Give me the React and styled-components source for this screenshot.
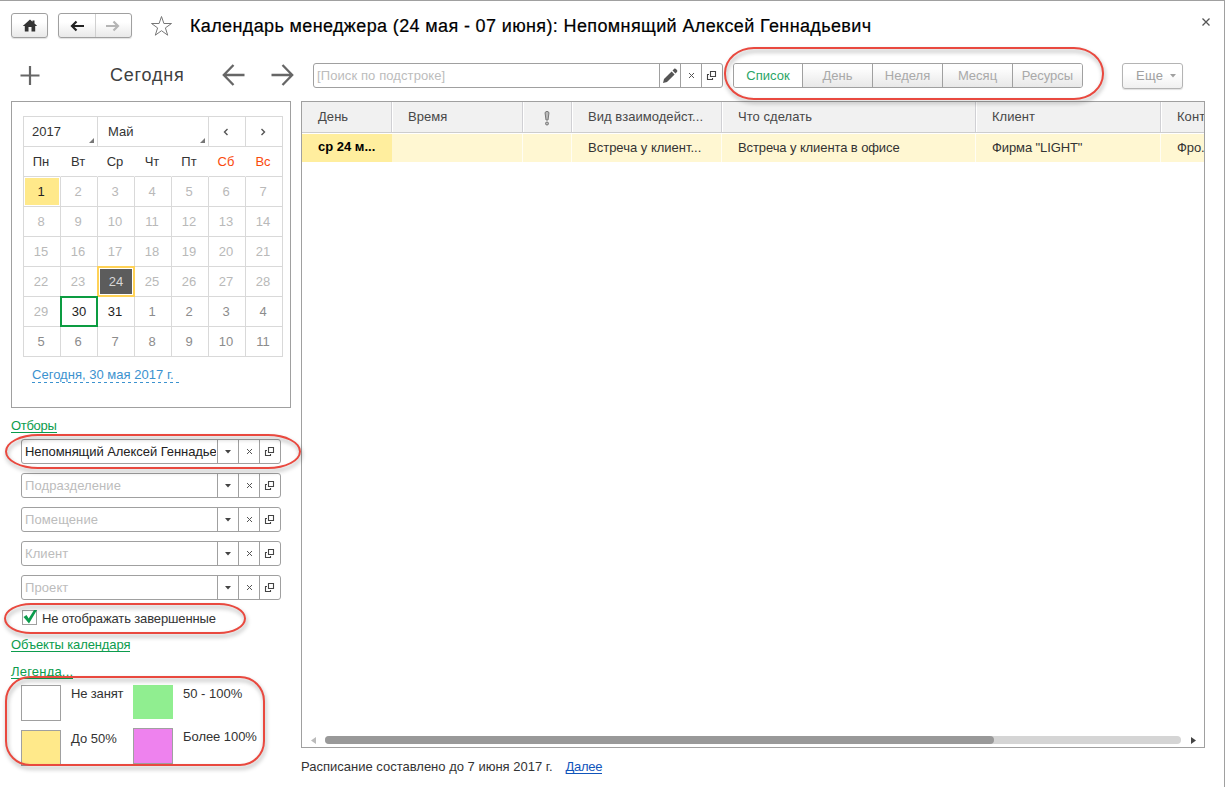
import React from "react";
import styled, { createGlobalStyle, css } from "styled-components";

const Global = createGlobalStyle`
  * { box-sizing: border-box; }
  body { margin: 0; background: #fff; }
  #root { font: 13px/16px "Liberation Sans", Arial, sans-serif; color: #333; }
`;

const line = "#a0a0a0";

const Window = styled.div`
  position: relative;
  width: 1225px;
  height: 787px;
  overflow: hidden;
  background: #fff;
  border-top: 1px solid ${line};
  border-right: 1px solid ${line};
`;

const Label = styled.span`
  white-space: nowrap;
  letter-spacing: ${(p) => p.$ls ?? 0}px;
  margin-top: ${(p) => p.$mt || 0}px;
`;

/* Title bar */
const TitleBar = styled.header`
  display: flex;
  align-items: center;
  height: 49px;
  padding: 0 12px 0 11px;
`;
const buttonFace = css`
  border: 1px solid ${line};
  border-radius: 3px;
  background: linear-gradient(#fff 35%, #e9e9e9);
  box-shadow: 0 1px 1px rgba(0, 0, 0, 0.12);
`;
const HomeButton = styled.button`
  ${buttonFace}
  width: 37px;
  height: 25px;
  padding: 0;
  display: flex;
  align-items: center;
  justify-content: center;
`;
const NavGroup = styled.div`
  ${buttonFace}
  display: flex;
  width: 74px;
  height: 25px;
  margin-left: 10px;
`;
const NavItem = styled.div`
  flex: 1;
  display: flex;
  align-items: center;
  justify-content: center;
  & + & { border-left: 1px solid #d0d0d0; }
`;
const Star = styled.svg`
  margin-left: 18px;
`;
const Title = styled.h1`
  margin: 1px 0 0 17px;
  flex: 1;
  font-size: 18px;
  line-height: 24px;
  font-weight: 400;
  color: #000;
  white-space: nowrap;
  letter-spacing: 0.37px;
  -webkit-text-stroke: 0.2px #000;
`;
const CloseIcon = styled.svg`
  margin-top: -8px;
`;

/* Toolbar */
const Toolbar = styled.div`
  display: flex;
  align-items: center;
  height: 51px;
  padding-left: 20px;
`;
const TodayButton = styled.div`
  width: 76px;
  margin-left: 70px;
  margin-top: -1px;
  font-size: 18px;
  line-height: 22px;
  color: #404040;
  letter-spacing: 0.8px;
  white-space: nowrap;
`;
const ArrowSvg = styled.svg`
  margin-left: ${(p) => p.$gap}px;
  margin-top: -1px;
`;
const Field = styled.div`
  display: flex;
  width: ${(p) => p.$w}px;
  height: 25px;
  border: 1px solid ${line};
  border-radius: 3px;
  background: #fff;
  margin-left: ${(p) => p.$ml || 0}px;
`;
const FieldText = styled.div`
  flex: 1;
  min-width: 0;
  overflow: hidden;
  white-space: nowrap;
  padding-left: 3px;
  margin-right: 1px;
  line-height: 23px;
  color: ${(p) => (p.$filled ? "#222" : "#bcbcbc")};
  letter-spacing: ${(p) => p.$ls ?? 0.1}px;
`;
const FieldButton = styled.div`
  width: 21px;
  border-left: 1px solid ${line};
  display: flex;
  align-items: center;
  justify-content: center;
`;
const Segments = styled.div`
  display: flex;
  width: 350px;
  height: 25px;
  margin-left: 10px;
  border: 1px solid ${line};
  border-radius: 3px;
  overflow: hidden;
`;
const Segment = styled.div`
  width: 70px;
  text-align: center;
  line-height: 24px;
  color: ${(p) => (p.$active ? "#2aa566" : "#a9a9a9")};
  background: ${(p) => (p.$active ? "#fff" : "linear-gradient(#fdfdfd 20%, #e8e8e8)")};
  & + & { border-left: 1px solid ${line}; }
  &:first-child { width: 68px; }
`;
const MoreButton = styled.div`
  ${buttonFace}
  border-color: #b4b4b4;
  background: linear-gradient(#fff 40%, #f0f0f0);
  width: 61px;
  height: 26px;
  margin-left: 39px;
  padding-left: 13px;
  display: flex;
  align-items: center;
  gap: 7px;
  color: #a0a0a0;
  letter-spacing: 0.3px;
`;

/* Main area */
const Body = styled.div`
  display: flex;
  gap: 10px;
  padding-left: 11px;
`;
const Side = styled.aside`
  width: 280px;
`;
const CalendarPanel = styled.section`
  height: 307px;
  border: 1px solid ${line};
  padding: 14px 7px 0 11px;
`;
const Grid = styled.div`
  display: grid;
  grid-template-columns: repeat(7, 37px);
  grid-auto-rows: 30px;
  width: 260px;
  border-top: 1px solid #d9d9d9;
  border-left: 1px solid #d9d9d9;
`;
const Cell = styled.div`
  position: relative;
  grid-column: span ${(p) => p.$span || 1};
  border-right: 1px solid #d9d9d9;
  border-bottom: 1px solid #d9d9d9;
  display: flex;
  align-items: center;
  justify-content: ${(p) => (p.$left ? "flex-start" : "center")};
  padding-left: ${(p) => (p.$left ? p.$left : 0)}px;
  padding-right: ${(p) => (p.$left ? 0 : 2)}px;
  color: ${(p) => p.$color || "#333"};
  ${(p) => p.$head && css`border-right-color: ${p.$last ? "#d9d9d9" : "transparent"};`}
  ${(p) => p.$mark === "busy" && css`background: #ffe98a; box-shadow: inset 0 0 0 1px #fff;`}
  ${(p) => p.$mark === "selected" && css`
    background: #5c5c5c;
    z-index: 1;
    margin: -1px 0 0 -1px;
    border: 2px solid #ffd257;
    box-shadow: inset 0 0 0 1px #fff;
    padding: 0;
  `}
  ${(p) => p.$mark === "today" && css`
    z-index: 2;
    margin: -1px 0 0 -1px;
    border: 2px solid #0c9c41;
    padding: 0;
  `}
`;
const Corner = styled.i`
  position: absolute;
  right: 3px;
  bottom: 3px;
  border-left: 5px solid transparent;
  border-bottom: 5px solid #777;
`;
const TodayLink = styled.div`
  width: 148px;
  margin: 10px 0 0 9px;
  height: 16px;
  color: #3b92cf;
  white-space: nowrap;
  letter-spacing: 0.02px;
  background: repeating-linear-gradient(90deg, #3b92cf 0 3px, transparent 3px 6px) 0 100% / 100% 1px no-repeat;
`;
const GreenLink = styled.a`
  display: block;
  width: max-content;
  height: 15px;
  line-height: 16px;
  margin-top: ${(p) => p.$mt}px;
  color: #0c9c4d;
  border-bottom: 1px solid #0c9c4d;
  white-space: nowrap;
  letter-spacing: ${(p) => p.$ls ?? 0}px;
`;
const Filters = styled.div`
  display: flex;
  flex-direction: column;
  gap: 9px;
  padding: 6px 0 0 10px;
`;
const CheckRow = styled.label`
  display: flex;
  align-items: center;
  gap: 5px;
  height: 16px;
  margin: 10px 0 0 11px;
`;
const CheckBox = styled.span`
  width: 15px;
  height: 15px;
  border: 1px solid ${line};
  margin-top: -1px;
  svg { display: block; margin: -2px 0 0 -1px; }
`;
const Legend = styled.div`
  display: flex;
  margin: 6px 0 0 10px;
`;
const LegendColumn = styled.div`
  width: 112px;
  display: flex;
  flex-direction: column;
  gap: 9px;
`;
const LegendItem = styled.div`
  display: flex;
  gap: 10px;
  white-space: nowrap;
`;
const Swatch = styled.span`
  flex: none;
  width: 40px;
  height: ${(p) => (p.$plain ? 34 : 36)}px;
  background: ${(p) => p.$color};
  border: ${(p) => (p.$plain ? "0" : "1px")} solid ${line};
`;

const Main = styled.main`
  width: 904px;
`;
const Table = styled.section`
  display: flex;
  flex-direction: column;
  height: 647px;
  border: 1px solid ${line};
  overflow: hidden;
`;
const columns = "90px 131px 49px 150px 254px 185px 43px";
const HeadRow = styled.div`
  display: grid;
  grid-template-columns: ${columns};
  height: 31px;
  background: #f1f1f1;
  border-bottom: 1px solid #cdcdcd;
`;
const HeadCell = styled.div`
  border-right: 1px solid #d0d0d4;
  box-shadow: 1px 0 0 #fff;
  padding-left: ${(p) => (p.$icon ? 19 : 16)}px;
  line-height: 29px;
  color: #484848;
  white-space: nowrap;
  letter-spacing: 0.05px;
  &:last-child { border-right: 0; box-shadow: none; }
`;
const Row = styled.div`
  display: grid;
  grid-template-columns: ${columns};
  height: 29px;
  border-bottom: 1px solid #e0e0e0;
  padding: 1px 0;
`;
const DataCell = styled.div`
  background: ${(p) => (p.$day ? "#ffee9e" : "#fff7d2")};
  font-weight: ${(p) => (p.$day ? 700 : 400)};
  color: ${(p) => (p.$day ? "#000" : "#333")};
  border-right: 1px solid ${(p) => (p.$day ? "#ffee9e" : "#fffdf3")};
  padding-left: 16px;
  line-height: ${(p) => (p.$day ? 25 : 28)}px;
  white-space: nowrap;
  letter-spacing: ${(p) => p.$ls ?? -0.1}px;
  &:last-child { border-right: 0; }
`;
const ScrollBar = styled.div`
  margin-top: auto;
  height: 14px;
  padding: 0 8px 0 9px;
  display: flex;
  align-items: center;
`;
const ScrollTrack = styled.div`
  flex: 1;
  height: 8px;
  margin: 0 10px 0 9px;
  border-radius: 4px;
  background: #d5d5d5;
`;
const ScrollThumb = styled.div`
  width: 669px;
  height: 8px;
  border-radius: 4px;
  background: #999;
`;
const Footer = styled.footer`
  display: flex;
  gap: 13px;
  margin-top: 11px;
`;
const NextLink = styled.a`
  color: #1155bb;
  height: 15px;
  letter-spacing: -0.3px;
  border-bottom: 1px solid #1155bb;
`;

/* Red callouts lying over the interface */
const Callout = styled.div`
  position: absolute;
  left: ${(p) => p.$x}px;
  top: ${(p) => p.$y}px;
  width: ${(p) => p.$w}px;
  height: ${(p) => p.$h}px;
  border: 2px solid #e9493f;
  border-radius: ${(p) => p.$r};
  filter: drop-shadow(1px 3px 2px rgba(0, 0, 0, 0.35));
  z-index: 5;
`;

const Caret = ({ color = "#444" }) => (
  <svg width="6" height="4" viewBox="0 0 6 4"><path d="M0 0h6L3 3.5z" fill={color} /></svg>
);
const Cross = () => (
  <svg width="7" height="7" viewBox="0 0 7 7"><path d="M1 1l5 5M6 1L1 6" stroke="#555" fill="none" /></svg>
);
const OpenIcon = () => (
  <svg width="12" height="11" viewBox="0 0 12 11" fill="none" stroke="#444" strokeWidth="1.1">
    <path d="M4.500 1.500h5v5h-5zM3 4.500H1.500v5h5V8" />
  </svg>
);
const Pencil = () => (
  <svg width="16" height="16" viewBox="0 0 16 16" fill="#555">
    <path d="M1 15l1-4 7.600-7.600 3 3L5 14zM10.500 2.500L12 1c.7-.6 1.400-.5 2 .1l.9.9c.6.600.6 1.300 0 2L13.500 5.500z" />
  </svg>
);

const Lookup = ({ text, filled, ls }) => (
  <Field $w={260}>
    <FieldText $filled={filled} $ls={ls}>{text}</FieldText>
    <FieldButton><Caret /></FieldButton>
    <FieldButton><Cross /></FieldButton>
    <FieldButton><OpenIcon /></FieldButton>
  </Field>
);

const weekdays = ["Пн", "Вт", "Ср", "Чт", "Пт", "Сб", "Вс"];
const days = Array.from({ length: 42 }, (_, i) => (i < 31 ? i + 1 : i - 30));
const marks = { 0: "busy", 23: "selected", 29: "today" };
const dayColor = (i) => {
  if (i === 0 || i === 29 || i === 30) return "#222";
  if (i === 23) return "#d8d8d8";
  return i > 30 ? "#8c8c8c" : "#b9b9b9";
};

export default function App() {
  return (
    <Window>
      <Global />
      <TitleBar>
        <HomeButton>
          <svg width="16" height="13" viewBox="0 0 16 13" fill="#333">
            <path d="M8 0.500L0.800 7h2v5.500h3.700V8h3v4.500h3.700V7h2L12.500 4.500V1.500h-2v1.300z" />
          </svg>
        </HomeButton>
        <NavGroup>
          <NavItem>
            <svg width="14" height="12" viewBox="0 0 14 12" fill="none" stroke="#222" strokeWidth="2.200">
              <path d="M14 6H2M6.500 1.500L2 6l4.500 4.500" />
            </svg>
          </NavItem>
          <NavItem>
            <svg width="14" height="12" viewBox="0 0 14 12" fill="none" stroke="#b5b5b5" strokeWidth="2.200">
              <path d="M0 6h12M7.500 1.500L12 6l-4.500 4.500" />
            </svg>
          </NavItem>
        </NavGroup>
        <Star width="23" height="22" viewBox="0 0 23 22" fill="none" stroke="#777">
          <path d="M11.500 1.500l2.400 7h7.600l-6.100 4.400 2.300 7.300-6.200-4.500-6.200 4.500 2.300-7.300L1.500 8.500h7.600z" />
        </Star>
        <Title>Календарь менеджера (24 мая - 07 июня): Непомнящий Алексей Геннадьевич</Title>
        <CloseIcon width="12" height="12" viewBox="0 0 12 12" stroke="#555" strokeWidth="1.300">
          <path d="M2.500 2.500l7 7M9.500 2.500l-7 7" />
        </CloseIcon>
      </TitleBar>

      <Toolbar>
        <svg width="20" height="20" viewBox="0 0 20 20" stroke="#666" strokeWidth="2.200">
          <path d="M10 0v19M0.500 9.500h19" />
        </svg>
        <TodayButton>Сегодня</TodayButton>
        <ArrowSvg $gap={36} width="23" height="22" viewBox="0 0 23 22" fill="none" stroke="#666" strokeWidth="2.300">
          <path d="M22.500 11H2M11.500 1L1.800 11l9.700 10" />
        </ArrowSvg>
        <ArrowSvg $gap={26} width="23" height="22" viewBox="0 0 23 22" fill="none" stroke="#666" strokeWidth="2.300">
          <path d="M0.500 11H21M11.500 1l9.700 10-9.700 10" />
        </ArrowSvg>
        <Field $w={410} $ml={19}>
          <FieldText>[Поиск по подстроке]</FieldText>
          <FieldButton><Pencil /></FieldButton>
          <FieldButton><Cross /></FieldButton>
          <FieldButton><OpenIcon /></FieldButton>
        </Field>
        <Segments>
          <Segment $active>Список</Segment>
          <Segment>День</Segment>
          <Segment>Неделя</Segment>
          <Segment>Месяц</Segment>
          <Segment>Ресурсы</Segment>
        </Segments>
        <MoreButton>Еще <Caret color="#a0a0a0" /></MoreButton>
      </Toolbar>

      <Body>
        <Side>
          <CalendarPanel>
            <Grid>
              <Cell $span={2} $left={8}>2017<Corner /></Cell>
              <Cell $span={3} $left={10}>Май<Corner /></Cell>
              <Cell><svg width="6" height="8" viewBox="0 0 6 8" fill="none" stroke="#555" strokeWidth="1.400"><path d="M4.500 1l-3 3 3 3" /></svg></Cell>
              <Cell><svg width="6" height="8" viewBox="0 0 6 8" fill="none" stroke="#555" strokeWidth="1.400"><path d="M1.500 1l3 3-3 3" /></svg></Cell>
              {weekdays.map((d, i) => (
                <Cell key={d} $head $last={i === 6} $color={i > 4 ? "#fa4a0c" : "#333"}>{d}</Cell>
              ))}
              {days.map((d, i) => (
                <Cell key={i} $mark={marks[i]} $color={dayColor(i)}>{d}</Cell>
              ))}
            </Grid>
            <TodayLink>Сегодня, 30 мая 2017 г.</TodayLink>
          </CalendarPanel>
          <GreenLink $mt={10} $ls={-0.3}>Отборы</GreenLink>
          <Filters>
            <Lookup filled ls={-0.06} text="Непомнящий Алексей Геннадье" />
            <Lookup text="Подразделение" />
            <Lookup text="Помещение" />
            <Lookup text="Клиент" />
            <Lookup text="Проект" />
          </Filters>
          <CheckRow>
            <CheckBox>
              <svg width="16" height="16" viewBox="0 0 16 16"><path d="M1.500 8l3-2 2.200 3.500L12 1H15L7 14.500z" fill="#0c9c4d" /></svg>
            </CheckBox>
            <Label $ls={-0.13} $mt={1}>Не отображать завершенные</Label>
          </CheckRow>
          <GreenLink $mt={11} $ls={-0.12}>Объекты календаря</GreenLink>
          <GreenLink $mt={12} $ls={0.2}>Легенда...</GreenLink>
          <Legend>
            <LegendColumn>
              <LegendItem><Swatch $color="#fff" /><Label $mt={1} $ls={-0.15}>Не занят</Label></LegendItem>
              <LegendItem><Swatch $color="#ffe98a" /><Label $mt={1}>До 50%</Label></LegendItem>
            </LegendColumn>
            <LegendColumn>
              <LegendItem><Swatch $plain $color="#90ee90" /><Label $mt={1}>50 - 100%</Label></LegendItem>
              <LegendItem><Swatch $color="#ee82ee" /><Label $mt={1} $ls={-0.05}>Более 100%</Label></LegendItem>
            </LegendColumn>
          </Legend>
        </Side>

        <Main>
          <Table>
            <HeadRow>
              <HeadCell>День</HeadCell>
              <HeadCell>Время</HeadCell>
              <HeadCell $icon>
                <svg width="10" height="16" viewBox="0 0 10 16" fill="#bbb" stroke="#777" style={{ verticalAlign: "middle" }}>
                  <path d="M3 2.500Q5 0 7 2.500L6 10H4z" /><circle cx="5" cy="13.500" r="1.500" />
                </svg>
              </HeadCell>
              <HeadCell>Вид взаимодейст...</HeadCell>
              <HeadCell>Что сделать</HeadCell>
              <HeadCell>Клиент</HeadCell>
              <HeadCell>Конт</HeadCell>
            </HeadRow>
            <Row>
              <DataCell $day $ls={0}>ср 24 м...</DataCell>
              <DataCell />
              <DataCell />
              <DataCell $ls={0}>Встреча у клиент...</DataCell>
              <DataCell>Встреча у клиента в офисе</DataCell>
              <DataCell>Фирма "LIGHT"</DataCell>
              <DataCell>Фро.</DataCell>
            </Row>
            <ScrollBar>
              <svg width="5" height="7" viewBox="0 0 5 7"><path d="M5 0v7L0 3.500z" fill="#bbb" /></svg>
              <ScrollTrack><ScrollThumb /></ScrollTrack>
              <svg width="5" height="7" viewBox="0 0 5 7"><path d="M0 0v7l5-3.500z" fill="#444" /></svg>
            </ScrollBar>
          </Table>
          <Footer>
            <Label>Расписание составлено до 7 июня 2017 г.</Label>
            <NextLink>Далее</NextLink>
          </Footer>
        </Main>
      </Body>

      <Callout $x={724} $y={46} $w={380} $h={53} $r="30px / 26px" />
      <Callout $x={5} $y={433} $w={296} $h={35} $r="33px / 17.5px" />
      <Callout $x={4} $y={602} $w={242} $h={31} $r="27px / 15.5px" />
      <Callout $x={5} $y={675} $w={260} $h={90} $r="25px" />
    </Window>
  );
}
